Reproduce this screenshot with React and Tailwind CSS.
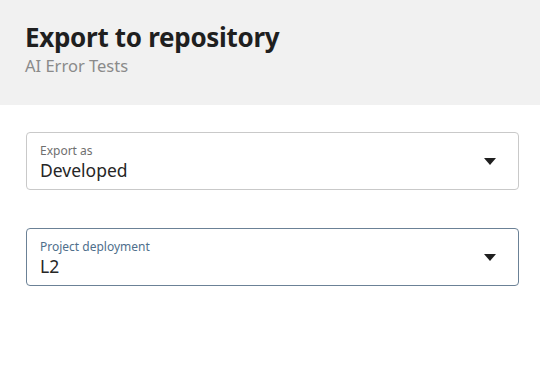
export default function App() {
  return (
    <div className="h-[381px] w-[540px] overflow-hidden bg-white font-['Noto_Sans',sans-serif]">
      <div className="h-[105px] bg-[#f1f1f1] px-[25px] pt-[21px]">
        <h1 className="text-[26px] font-bold leading-[32px] tracking-[-0.3px] text-[#1f1f1f]">Export to repository</h1>
        <p className="mt-[3px] text-[16.5px] leading-[20px] text-[#8a8a8a]">AI Error Tests</p>
      </div>
      <div className="flex flex-col gap-[38px] px-[26px] pt-[27px] pr-[21px]">
        <Field label="Export as" value="Developed" />
        <Field label="Project deployment" value="L2" focused />
      </div>
    </div>
  );
}

function Field({ label, value, focused }) {
  return (
    <div
      className={`flex h-[58px] items-center rounded-[4px] border pl-[13px] pr-[22px] ${
        focused ? "border-[#6b8196]" : "border-[#c9c9c9]"
      }`}
    >
      <div className="flex-1 pt-[2px]">
        <div className={`text-[12px] leading-[16px] ${focused ? "text-[#4f6f8c]" : "text-[#6f6f6f]"}`}>{label}</div>
        <div className="text-[17.5px] leading-[22px] text-[#262626]">{value}</div>
      </div>
      <svg width="12" height="7" viewBox="0 0 12 7" aria-hidden="true">
        <path d="M0 0h12L6 7z" fill="#1f1f1f" />
      </svg>
    </div>
  );
}
